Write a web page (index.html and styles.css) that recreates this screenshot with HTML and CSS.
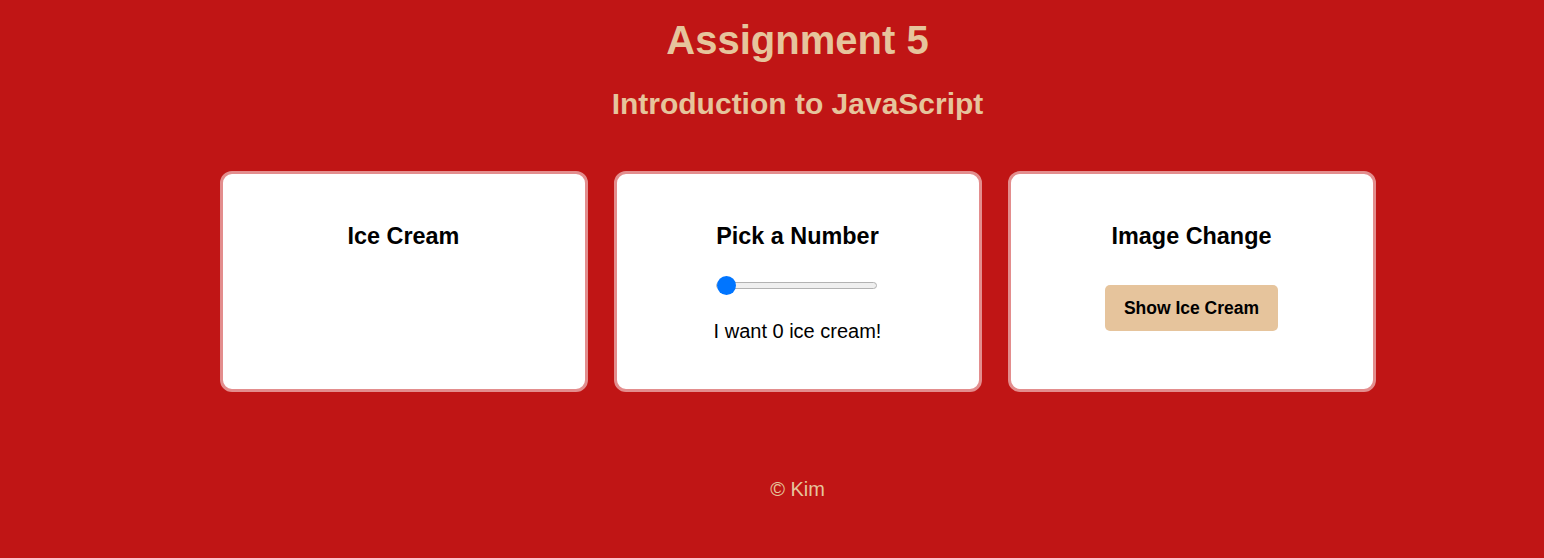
FILE: index.html
```html
<!DOCTYPE html>
<html lang="en">
<head>
<meta charset="utf-8">
<title>Assignment 5</title>
<link rel="stylesheet" href="styles.css">
</head>
<body>
<header class="page-header">
  <h1 class="title">Assignment 5</h1>
  <h2 class="subtitle">Introduction to JavaScript</h2>
</header>
<main class="cards">
  <section class="card">
    <h3 class="card-title">Ice Cream</h3>
  </section>
  <section class="card">
    <h3 class="card-title">Pick a Number</h3>
    <input class="slider" type="range" min="0" max="10" value="0">
    <p class="card-text">I want 0 ice cream!</p>
  </section>
  <section class="card">
    <h3 class="card-title">Image Change</h3>
    <button class="btn" type="button">Show Ice Cream</button>
  </section>
</main>
<footer class="footer">© Kim</footer>
</body>
</html>
```

FILE: styles.css
```css
html, body {
  margin: 0;
  padding: 0;
}
body {
  background: #c01515;
  font-family: "Liberation Sans", Arial, sans-serif;
  color: #e6c49c;
  padding-left: 51px;
  min-height: 558px;
  box-sizing: border-box;
}
.page-header {
  text-align: center;
  padding-top: 17px;
}
.title {
  margin: 0;
  font-size: 40px;
  line-height: 46px;
  font-weight: bold;
}
.subtitle {
  margin: 23px 0 0;
  font-size: 30px;
  line-height: 35px;
  font-weight: bold;
}
.cards {
  display: flex;
  justify-content: center;
  gap: 26px;
  margin-top: 50px;
}
.card {
  width: 368px;
  box-sizing: border-box;
  background: #fff;
  border: 3px solid #e38d8d;
  border-radius: 12px;
  padding: 48px 20px 46px;
  text-align: center;
  color: #000;
}
.card-title {
  margin: 0;
  font-size: 23.4px;
  line-height: 28px;
  font-weight: bold;
}
.slider {
  -webkit-appearance: none;
  appearance: none;
  display: block;
  width: 161px;
  height: 19px;
  margin: 26px auto 0;
  padding: 0;
  background: transparent;
  transform: translateX(-1px);
}
.slider::-webkit-slider-runnable-track {
  height: 7px;
  background: #efefef;
  border: 1px solid #b2b2b2;
  border-radius: 5px;
}
.slider::-webkit-slider-thumb {
  -webkit-appearance: none;
  appearance: none;
  width: 19px;
  height: 19px;
  margin-top: -7px;
  border: none;
  border-radius: 50%;
  background: #0075ff;
}
.card-text {
  margin: 25px 0 0;
  font-size: 20px;
  line-height: 23px;
}
.btn {
  display: block;
  margin: 35px auto 0;
  width: 173px;
  height: 46px;
  border: none;
  border-radius: 5px;
  background: #e6c49c;
  color: #000;
  font-family: "Liberation Sans", Arial, sans-serif;
  font-size: 17.5px;
  font-weight: bold;
  cursor: pointer;
}
.footer {
  text-align: center;
  font-size: 20px;
  margin-top: 86px;
}
```
